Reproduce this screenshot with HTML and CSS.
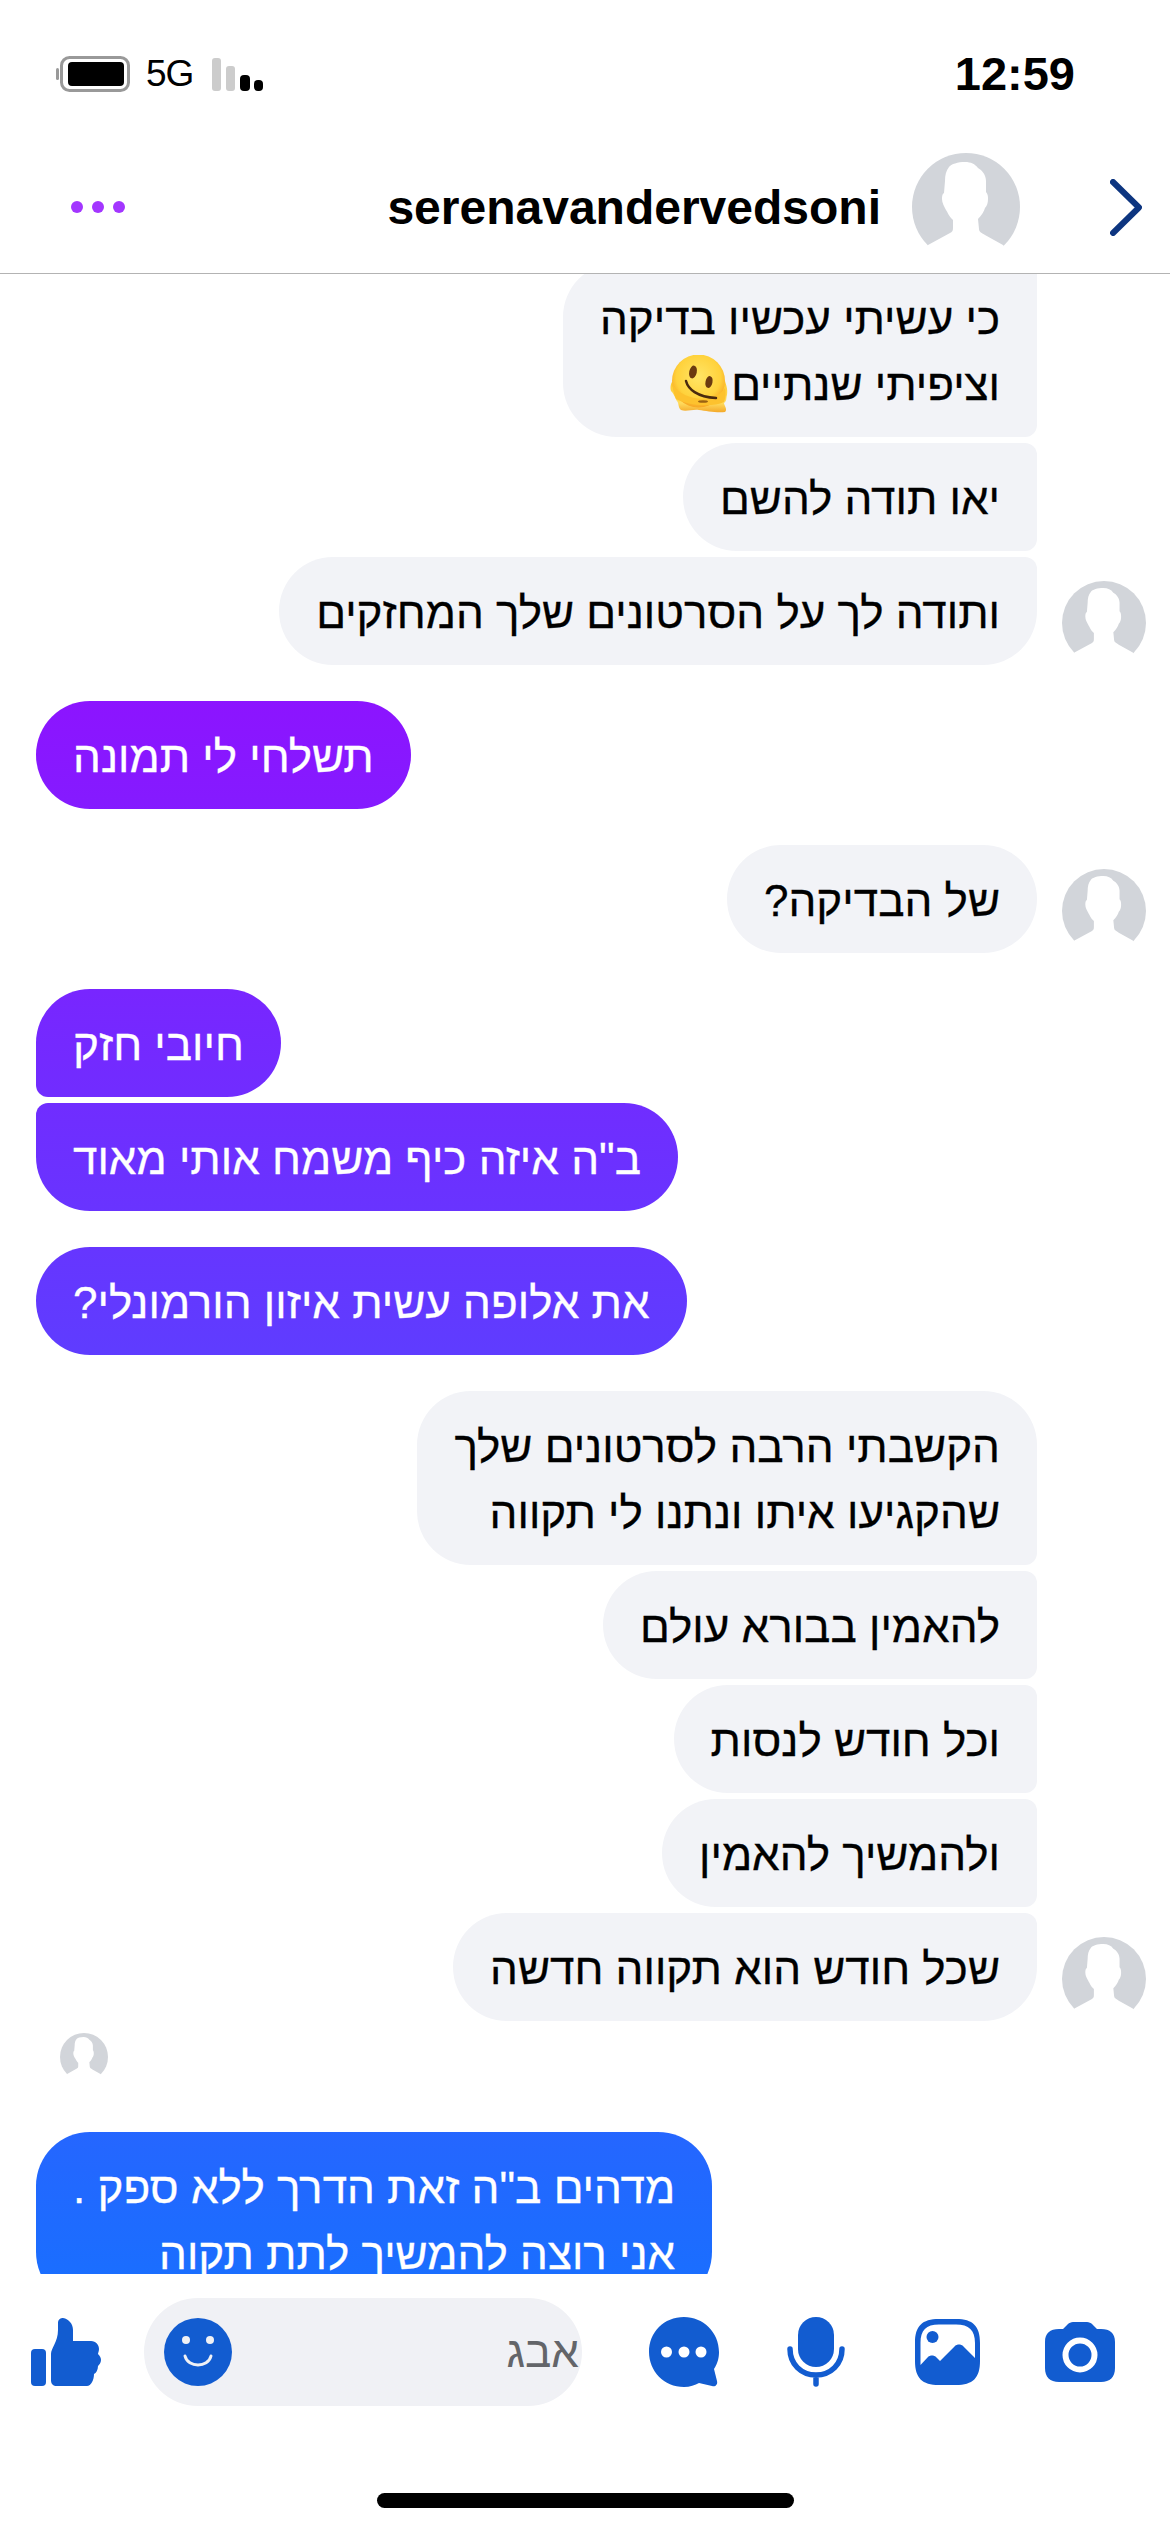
FILE: index.html
```html
<!DOCTYPE html>
<html lang="he">
  <head>
    <meta charset="utf-8">
    <title>serenavandervedsoni</title>
    <link rel="stylesheet" href="styles.css">
  </head>
  <body>
    <svg class="defs" width="0" height="0">
      <symbol id="person" viewBox="0 0 108 108">
        <circle cx="54" cy="54" r="54" fill="#d2d5da"/>
        <path fill="#fff" d="M53 9C46 9 39 11 37 14C34 18 33 22 33 28L32 40C30 41 30 44 30 46C30 50 32 53 34 57C36 60 37 63 39 65L41 67L41 75C41 78 40 79 38 80L16 92L10 100V108H98V100L91 92L73 82C70 80 67 79 67 76L66 66C70 62 72 58 73 55C75 53 76 50 76 46C76 44 76 41 74 39L74 28C74 22 70 17 66 15C63 11 59 9 53 9Z"/>
      </symbol>
    </svg>

    <div class="status">
      <div class="status-left">
        <svg class="battery" viewBox="0 0 74 36" width="74" height="36">
          <rect x="0" y="12" width="3" height="12" rx="1.500" fill="#999"/>
          <rect x="5.500" y="1.500" width="67" height="33" rx="8" fill="none" stroke="#999" stroke-width="3"/>
          <rect x="12" y="6" width="56" height="24" rx="4" fill="#000"/>
        </svg>
        <span class="net">5G</span>
        <svg class="signal" viewBox="0 0 51 33" width="51" height="33">
          <rect x="0" y="0" width="9" height="33" rx="3" fill="#ccc"/>
          <rect x="14" y="8" width="9" height="25" rx="3" fill="#ccc"/>
          <rect x="28" y="17" width="10" height="16" rx="4" fill="#000"/>
          <rect x="42" y="22" width="9" height="11" rx="4" fill="#000"/>
        </svg>
      </div>
      <div class="clock">12:59</div>
    </div>

    <div class="header">
      <div class="more"><i></i><i></i><i></i></div>
      <div class="who">
        <span class="name">serenavandervedsoni</span>
        <svg class="head-avatar"><use href="#person"/></svg>
      </div>
      <svg class="back" viewBox="0 0 32 57" width="32" height="57">
        <path d="M3 3L29 28.500L3 54" fill="none" stroke="#0d3580" stroke-width="6" stroke-linecap="round" stroke-linejoin="round"/>
      </svg>
    </div>

    <div class="chat" dir="rtl">
      <div class="list">
        <div class="row them first">
          <span class="slot"></span>
          <div class="bubble in tail-mid">כי עשיתי עכשיו בדיקה<br>וציפיתי שנתיים<svg class="melt" viewBox="0 0 58 58" width="58" height="58">
            <defs>
              <radialGradient id="meltface" cx="0.5" cy="0.42" r="0.58">
                <stop offset="0" stop-color="#ffe566"/>
                <stop offset="0.72" stop-color="#ffd23c"/>
                <stop offset="1" stop-color="#f7a624"/>
              </radialGradient>
              <linearGradient id="meltpool" x1="0" y1="0" x2="0" y2="1">
                <stop offset="0" stop-color="#fdc92f"/>
                <stop offset="0.7" stop-color="#ffdc5e"/>
                <stop offset="1" stop-color="#f4a92a"/>
              </linearGradient>
            </defs>
            <path fill="url(#meltpool)" d="M2 27C0 30 0 36 2 37C5 41 6 45 7 46C9 48 8 53 11 55C16 57 23 54 29 55C36 56 47 58 55 57C58 55 54 50 54 48C57 46 56 43 57 40C58 34 56 30 55 26Z"/>
            <circle cx="28.500" cy="26" r="26.500" fill="url(#meltface)"/>
            <path fill="#fdc22e" d="M3 30C12 45 44 50 55 33C56 38 56 42 54 47C42 53 16 50 6 44C4 40 3 35 3 30Z"/>
            <ellipse cx="23" cy="17" rx="3.800" ry="6.500" fill="#6b3a10" transform="rotate(12 23 17)"/>
            <ellipse cx="39" cy="27" rx="3.500" ry="6" fill="#6b3a10" transform="rotate(12 39 27)"/>
            <path d="M16 26C18 34 27 42 46 43" fill="none" stroke="#4a2a0e" stroke-width="2.500" stroke-linecap="round"/>
            <ellipse cx="33" cy="46.500" rx="5" ry="1.300" fill="#9a6212"/>
          </svg></div>
        </div>
        <div class="row them">
          <span class="slot"></span>
          <div class="bubble in tail-mid">יאו תודה להשם</div>
        </div>
        <div class="row them">
          <svg class="slot"><use href="#person"/></svg>
          <div class="bubble in tail-last">ותודה לך על הסרטונים שלך המחזקים</div>
        </div>

        <div class="row me turn">
          <div class="bubble out">תשלחי לי תמונה</div>
        </div>

        <div class="row them turn">
          <svg class="slot"><use href="#person"/></svg>
          <div class="bubble in">של הבדיקה?</div>
        </div>

        <div class="row me turn">
          <div class="bubble out tail-first">חיובי חזק</div>
        </div>
        <div class="row me">
          <div class="bubble out tail-last">ב"ה איזה כיף משמח אותי מאוד</div>
        </div>
        <div class="row me turn">
          <div class="bubble out">את אלופה עשית איזון הורמונלי?</div>
        </div>

        <div class="row them turn">
          <span class="slot"></span>
          <div class="bubble in tail-first">הקשבתי הרבה לסרטונים שלך<br>שהקגיעו איתו ונתנו לי תקווה</div>
        </div>
        <div class="row them">
          <span class="slot"></span>
          <div class="bubble in tail-mid">להאמין בבורא עולם</div>
        </div>
        <div class="row them">
          <span class="slot"></span>
          <div class="bubble in tail-mid">וכל חודש לנסות</div>
        </div>
        <div class="row them">
          <span class="slot"></span>
          <div class="bubble in tail-mid">ולהמשיך להאמין</div>
        </div>
        <div class="row them">
          <svg class="slot"><use href="#person"/></svg>
          <div class="bubble in tail-last">שכל חודש הוא תקווה חדשה</div>
        </div>

        <div class="seen"><svg class="seen-face"><use href="#person"/></svg></div>

        <div class="row me">
          <div class="bubble out newest">מדהים ב"ה זאת הדרך ללא ספק .<br>אני רוצה להמשיך לתת תקוה</div>
        </div>
      </div>
    </div>

    <div class="composer">
      <svg class="ico" viewBox="0 0 70 68" width="70" height="68">
        <rect x="0" y="31" width="15" height="37" rx="4"/>
        <path d="M20 36C20 30 27 24 27 12V5C27 1 30 0 32 0C38 1 42 6 42 12V23H60C65 23 68 27 68 31C68 33 67 35 67 36C69 38 70 40 70 42C70 45 68 47 67 48C67 52 65 55 63 56C63 62 60 68 56 68H26C22 68 20 66 20 62Z"/>
      </svg>
      <div class="field">
        <svg class="ico" viewBox="0 0 68 68" width="68" height="68">
          <circle cx="34" cy="34" r="34"/>
          <circle cx="22" cy="22" r="4" fill="#f0f1f5"/>
          <circle cx="46" cy="22" r="4" fill="#f0f1f5"/>
          <path d="M21 38C24 50 44 50 47 38" fill="none" stroke="#f0f1f5" stroke-width="3" stroke-linecap="round"/>
        </svg>
        <span class="hint">אבג</span>
      </div>
      <div class="tools">
        <svg class="ico" viewBox="0 0 70 70" width="70" height="70">
          <path d="M35 0C54 0 70 15 70 35C70 40 69 46 65 52L68 64C69 68 66 70 63 69L50 66C46 68 41 70 35 70C15 70 0 54 0 35C0 15 15 0 35 0Z"/>
          <circle cx="17.500" cy="35" r="5.500" fill="#fff"/>
          <circle cx="35" cy="35" r="5.500" fill="#fff"/>
          <circle cx="52" cy="35" r="5.500" fill="#fff"/>
        </svg>
        <svg class="ico" viewBox="0 0 58 70" width="58" height="70">
          <rect x="11" y="0" width="36" height="50" rx="18"/>
          <path d="M3 32C3 47 14 58 29 58C44 58 55 47 55 32M29 58V67" fill="none" stroke="#125cd0" stroke-width="5.500" stroke-linecap="round"/>
        </svg>
        <svg class="ico photo" viewBox="0 0 65 66" width="65" height="66">
          <path d="M24 0H41C58 0 65 7 65 24V42C65 59 58 66 41 66H24C7 66 0 59 0 42V24C0 7 7 0 24 0ZM24 5.500C11 5.500 5.500 11 5.500 24V46L13 38C15 36 19 36 21 38L25 42L40 27C42 25 46 25 48 27L60 39V24C60 11 54 5.500 41 5.500Z"/>
          <circle cx="17.500" cy="18" r="6"/>
        </svg>
        <svg class="ico" viewBox="0 0 70 60" width="70" height="60">
          <path d="M18 7L23 2C24 1 26 0 28 0H42C44 0 46 1 47 2L52 7H56C65 7 70 11 70 20V46C70 55 65 60 56 60H14C5 60 0 55 0 46V20C0 11 5 7 14 7Z"/>
          <circle cx="35" cy="33" r="14.500" fill="none" stroke="#fff" stroke-width="6"/>
        </svg>
      </div>
    </div>
    <div class="home"></div>
  </body>
</html>
```

FILE: styles.css
```css
html, body { margin: 0; padding: 0; background: #fff; }

body { width: 1170px; height: 2532px; overflow: hidden;
       font-family: "Liberation Sans", "Noto Sans", sans-serif; color: #000; }

.defs { position: absolute; }

/* status bar */
.status      { height: 141px; box-sizing: border-box; padding: 56px 95px 0 56px;
               display: flex; justify-content: space-between; align-items: flex-start; }
.status-left { display: flex; align-items: center; }
.battery     { display: block; }
.net         { margin-left: 16px; font-size: 37px; line-height: 36px; letter-spacing: -1px; }
.signal      { margin-left: 19px; margin-top: 1px; }
.clock       { font-size: 47px; line-height: 36px; font-weight: bold; }

/* title bar */
.header { height: 132px; border-bottom: 1px solid #b3b3b3;
          display: flex; align-items: center; padding: 0 28px 0 71px; }
.more   { display: flex; gap: 9px; }
.more i { display: block; width: 12px; height: 12px; border-radius: 50%; background: #a336ff; }
.who    { margin-left: auto; display: flex; align-items: center; gap: 31px; margin-right: 90px; }
.name   { font-size: 48px; font-weight: bold; }
.head-avatar { width: 108px; height: 108px; display: block; }
.back   { display: block; }

/* messages */
.chat { height: 2000px; overflow: hidden; }
.list { margin-top: -11px; }

.row       { display: flex; margin-top: 6px; }
.row.first { margin-top: 0; }
.row.turn  { margin-top: 36px; }
.row.them  { padding-right: 24px; gap: 25px; align-items: flex-end; }
.row.me    { justify-content: flex-end; padding-left: 36px; }

.slot { width: 84px; height: 84px; flex: none; display: block; }

.bubble { font-size: 44px; line-height: 66px; padding: 23px 37px 19px;
          border-radius: 54px; box-sizing: border-box; white-space: nowrap;
          -webkit-text-stroke: 0.3px currentColor; }
.bubble.in  { background: #f2f3f7; }
.bubble.out { color: #fff;
              background: linear-gradient(180deg, #8c14ff 700px, #5f3cff 1350px, #1a6eff 2280px) fixed; }

/* corners on the speaker's side go small inside a run of bubbles */
.in.tail-first { border-bottom-right-radius: 12px; }
.in.tail-mid   { border-top-right-radius: 12px; border-bottom-right-radius: 12px; }
.in.tail-last  { border-top-right-radius: 12px; }
.out.tail-first { border-bottom-left-radius: 12px; }
.out.tail-last  { border-top-left-radius: 12px; }

.melt { display: inline-block; vertical-align: -13px; margin-right: 3px; }

.seen { direction: ltr; padding: 12px 0 0 60px; height: 105px; box-sizing: border-box; }
.seen-face { width: 48px; height: 48px; display: block; }

/* input row */
.composer { display: flex; align-items: center; padding: 24px 55px 0 31px; height: 108px; }
.ico      { fill: #125cd0; display: block; flex: none; }
.ico.photo { margin-left: 3px; margin-right: -3px; }
.field    { margin-left: 43px; width: 438px; height: 108px; box-sizing: border-box;
            border-radius: 54px; background: #f0f1f5; padding: 0 3px 0 20px;
            display: flex; align-items: center; justify-content: space-between; }
.hint     { font-size: 44px; color: #636569; }
.tools    { margin-left: 67px; flex: 1; display: flex; align-items: center; justify-content: space-between; }

.home { width: 417px; height: 15px; border-radius: 8px; background: #000;
        margin: 87px 0 0 377px; }
```
